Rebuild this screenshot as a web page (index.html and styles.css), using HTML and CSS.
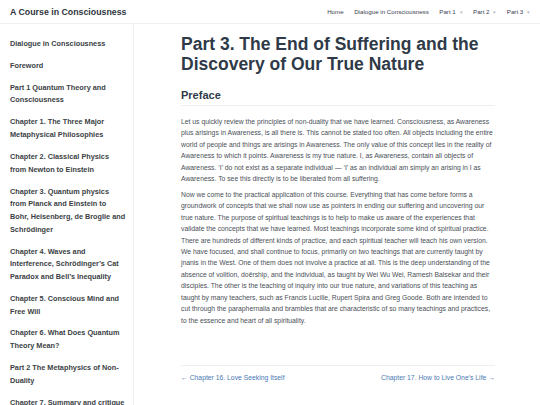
FILE: index.html
```html
<!DOCTYPE html>
<html>
<head>
<meta charset="utf-8">
<link rel="stylesheet" href="styles.css">
</head>
<body>
<header class="topbar">
  <div class="brand">A Course in Consciousness</div>
  <nav class="topnav">
    <a href="#">Home</a>
    <a href="#">Dialogue in Consciousness</a>
    <a href="#">Part 1 <span class="caret">▾</span></a>
    <a href="#">Part 2 <span class="caret">▾</span></a>
    <a href="#">Part 3 <span class="caret">▾</span></a>
  </nav>
</header>
<div class="layout">
  <aside class="sidebar">
    <a href="#">Dialogue in Consciousness</a>
    <a href="#">Foreword</a>
    <a href="#">Part 1 Quantum Theory and Consciousness</a>
    <a href="#">Chapter 1. The Three Major Metaphysical Philosophies</a>
    <a href="#">Chapter 2. Classical Physics from Newton to Einstein</a>
    <a href="#">Chapter 3. Quantum physics from Planck and Einstein to Bohr,&nbsp;Heisenberg, de Broglie and Schrödinger</a>
    <a href="#">Chapter 4. Waves and Interference, Schrödinger’s Cat Paradox and Bell’s Inequality</a>
    <a href="#">Chapter 5. Conscious Mind and Free Will</a>
    <a href="#">Chapter 6. What Does Quantum Theory Mean?</a>
    <a href="#">Part 2 The Metaphysics of Non-Duality</a>
    <a href="#">Chapter 7. Summary and critique of the classical and quantum theories</a>
  </aside>
  <main class="content">
    <h1>Part 3. The End of Suffering and the Discovery of Our True Nature</h1>
    <h2>Preface</h2>
    <p>Let us quickly review the principles of non-duality that we have learned. Consciousness, as Awareness plus arisings in Awareness, is all there is. This cannot be stated too often. All objects including the entire world of people and things are arisings in Awareness. The only value of this concept lies in the reality of Awareness to which it points. Awareness is my true nature. I, as Awareness, contain all objects of Awareness. ‘I’ do not exist as a separate individual — ‘I’ as an individual am simply an arising in I as Awareness. To see this directly is to be liberated from all suffering.</p>
    <p>Now we come to the practical application of this course. Everything that has come before forms a groundwork of concepts that we shall now use as pointers in ending our suffering and uncovering our true nature. The purpose of spiritual teachings is to help to make us aware of the experiences that validate the concepts that we have learned. Most teachings incorporate some kind of spiritual practice. There are hundreds of different kinds of practice, and each spiritual teacher will teach his own version. We have focused, and shall continue to focus, primarily on two teachings that are currently taught by jnanis in the West. One of them does not involve a practice at all. This is the deep understanding of the absence of volition, doërship, and the individual, as taught by Wei Wu Wei, Ramesh Balsekar and their disciples. The other is the teaching of inquiry into our true nature, and variations of this teaching as taught by many teachers, such as Francis Lucille, Rupert Spira and Greg Goode. Both are intended to cut through the paraphernalia and brambles that are characteristic of so many teachings and practices, to the essence and heart of all spirituality.</p>
    <nav class="pager">
      <a href="#">← Chapter 16. Love Seeking Itself</a>
      <a href="#">Chapter 17. How to Live One’s Life →</a>
    </nav>
  </main>
</div>
</body>
</html>
```
FILE: styles.css
```css
html, body {
  margin: 0;
  padding: 0;
  background: #fff;
  font-family: "Liberation Sans", Arial, sans-serif;
  color: #444;
}
a { text-decoration: none; color: inherit; }

.topbar {
  height: 24px;
  border-bottom: 1px solid #eef0f2;
  display: flex;
  align-items: center;
  justify-content: space-between;
  padding: 0 10px;
  box-sizing: border-box;
}
.brand {
  font-size: 8.8px;
  font-weight: bold;
  color: #2f3640;
}
.topnav {
  display: flex;
  gap: 10.5px;
  font-size: 6.2px;
  color: #3b4350;
}
.caret { color: #b4b8c0; font-size: 5px; margin-left: 2px; }

.layout {
  display: flex;
  align-items: stretch;
}
.sidebar {
  width: 134px;
  flex: none;
  border-right: 1px solid #eef0f2;
  box-sizing: border-box;
  padding: 14px 6px 0 10px;
  display: flex;
  flex-direction: column;
  gap: 9.2px;
  font-size: 7.3px;
  line-height: 12.7px;
  font-weight: bold;
  color: #3b3f45;
  overflow: hidden;
  height: 381px;
}
.content {
  width: 314px;
  padding: 11px 0 0 47px;
}
h1 {
  margin: 0;
  font-size: 17.5px;
  line-height: 19.5px;
  color: #2f3a48;
  font-weight: bold;
}
h2 {
  margin: 14px 0 10px;
  font-size: 11px;
  line-height: 14px;
  color: #2f3a48;
  padding-bottom: 3px;
  border-bottom: 1px solid #eef0f2;
}
p {
  margin: 0 0 4.6px;
  font-size: 6.8px;
  line-height: 11.4px;
  color: #4a4f57;
}
.pager {
  margin-top: 39px;
  border-top: 1px solid #eef0f2;
  padding-top: 8px;
  display: flex;
  justify-content: space-between;
  font-size: 6.8px;
  color: #4a7ab3;
}
```
